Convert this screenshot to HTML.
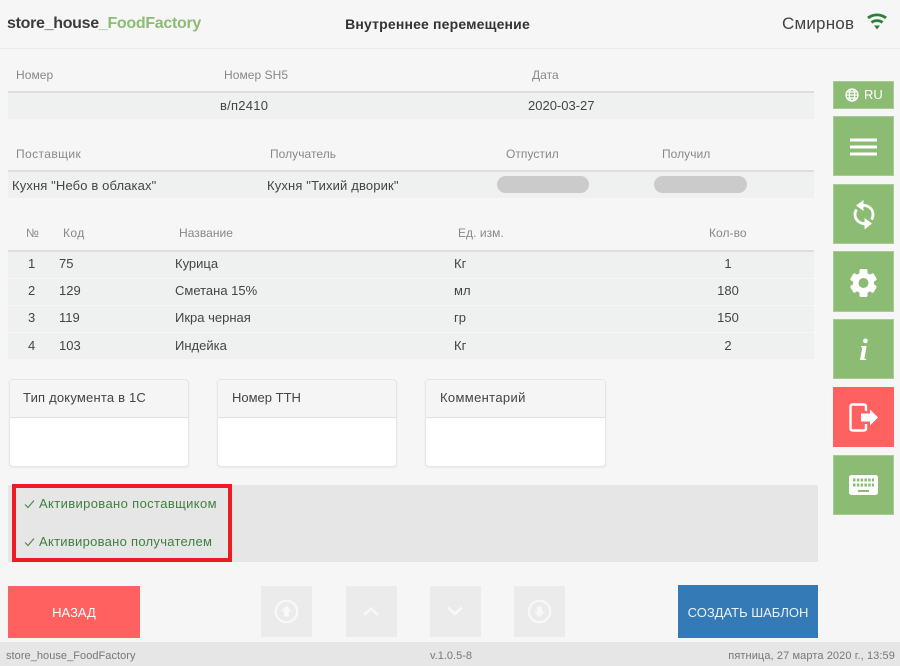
<!DOCTYPE html>
<html lang="ru"><head><meta charset="utf-8"><title>Внутреннее перемещение</title>
<style>
html,body{margin:0;padding:0}
body{width:900px;height:666px;position:relative;overflow:hidden;background:#f6f6f6;font-family:"Liberation Sans",sans-serif;color:#444}
.a{position:absolute}
.t{position:absolute;white-space:nowrap;line-height:16px;font-size:13px;color:#444}
.l{color:#888;font-size:12px;letter-spacing:.05px}
.c{transform:translateX(-50%)}
.band{position:absolute;left:8px;width:806px;background:#eff1f1}
.line{position:absolute;left:8px;width:806px;height:2px;background:#dedede}
.g{position:absolute;left:833px;width:61px;background:#8cbb74;box-shadow:0 0 0 1px #a6cb93 inset}
.card{position:absolute;top:379px;height:86px;background:#fff;border:1px solid #e6e6e6;border-radius:4px;box-shadow:0 1px 2px rgba(0,0,0,.06);overflow:hidden}
.card div{background:#f5f5f5;border-bottom:1px solid #e2e2e2;padding:10px 0 0 14px;box-sizing:border-box;height:38px;font-size:13px;line-height:16px;color:#444}
.sq{position:absolute;top:586px;width:51px;height:51px;background:#ebebeb}
svg{position:absolute;display:block}
</style></head><body>

<div class="t" style="left:7px;top:15px;font-size:16px;font-weight:bold;line-height:18px;letter-spacing:-.3px;color:#3c3c3c">store_house<span style="color:#8cbb74;font-weight:bold">_FoodFactory</span></div>
<div class="t c" style="left:437.500px;top:16px;font-size:14px;font-weight:bold;letter-spacing:.17px;color:#333">Внутреннее перемещение</div>
<div class="t" style="left:782px;top:14px;font-size:17px;line-height:20px;letter-spacing:.2px;color:#444">Смирнов</div>
<svg style="left:865px;top:12px" width="24" height="20" viewBox="0 0 24 20"><g fill="none" stroke="#2f7d3a" stroke-width="2.800"><path d="M3 6C8 1.800 16 1.800 21 6"/><path d="M6.500 10.500C9.500 8 14.500 8 17.500 10.500"/></g><path d="M9 13.500H15L12 17.500Z" fill="#2f7d3a"/></svg>
<div class="a" style="left:0;top:48px;width:900px;height:1px;background:#ebebeb"></div>

<div class="t l" style="left:16px;top:67px">Номер</div>
<div class="t l" style="left:224px;top:67px">Номер SH5</div>
<div class="t l" style="left:532px;top:67px">Дата</div>
<div class="band" style="top:92px;height:27px"></div><div class="line" style="top:91px"></div>
<div class="t" style="left:220px;top:98px;letter-spacing:.25px">в/п2410</div>
<div class="t" style="left:528px;top:98px">2020-03-27</div>

<div class="t l" style="left:16px;top:146px;letter-spacing:.4px">Поставщик</div>
<div class="t l" style="left:270px;top:146px">Получатель</div>
<div class="t l" style="left:506px;top:146px">Отпустил</div>
<div class="t l" style="left:662px;top:146px">Получил</div>
<div class="band" style="top:171px;height:27px"></div><div class="line" style="top:170px"></div>
<div class="t" style="left:12px;top:178px;letter-spacing:.13px">Кухня "Небо в облаках"</div>
<div class="t" style="left:267px;top:178px;letter-spacing:.15px">Кухня "Тихий дворик"</div>
<div class="a" style="left:497px;top:176px;width:92px;height:17px;border-radius:9px;background:#cbcbcb"></div>
<div class="a" style="left:654px;top:176px;width:93px;height:17px;border-radius:9px;background:#cbcbcb"></div>

<div class="t l" style="left:26px;top:225px">№</div>
<div class="t l" style="left:63px;top:225px;letter-spacing:.4px">Код</div>
<div class="t l" style="left:179px;top:225px">Название</div>
<div class="t l" style="left:458px;top:225px">Ед. изм.</div>
<div class="t l" style="left:709px;top:225px">Кол-во</div>
<div class="band" style="top:251px;height:27px"></div><div class="line" style="top:250px"></div>
<div class="band" style="top:279px;height:26px"></div>
<div class="band" style="top:306px;height:26px"></div>
<div class="band" style="top:333px;height:26px"></div>

<div class="t" style="left:28px;top:256px">1</div><div class="t" style="left:59px;top:256px">75</div><div class="t" style="left:175px;top:256px">Курица</div><div class="t" style="left:454px;top:256px">Кг</div><div class="t c" style="left:728px;top:256px">1</div>
<div class="t" style="left:28px;top:283px">2</div><div class="t" style="left:59px;top:283px">129</div><div class="t" style="left:175px;top:283px">Сметана 15%</div><div class="t" style="left:454px;top:283px">мл</div><div class="t c" style="left:728px;top:283px">180</div>
<div class="t" style="left:28px;top:310px">3</div><div class="t" style="left:59px;top:310px">119</div><div class="t" style="left:175px;top:310px">Икра черная</div><div class="t" style="left:454px;top:310px">гр</div><div class="t c" style="left:728px;top:310px">150</div>
<div class="t" style="left:28px;top:338px">4</div><div class="t" style="left:59px;top:338px">103</div><div class="t" style="left:175px;top:338px">Индейка</div><div class="t" style="left:454px;top:338px">Кг</div><div class="t c" style="left:728px;top:338px">2</div>

<div class="card" style="left:9px;width:178px"><div style="letter-spacing:.2px;padding-left:13px">Тип документа в 1С</div></div>
<div class="card" style="left:217px;width:178px"><div>Номер ТТН</div></div>
<div class="card" style="left:425px;width:179px"><div style="letter-spacing:.35px">Комментарий</div></div>

<div class="a" style="left:8px;top:485px;width:810px;height:77px;background:#e6e6e6"></div>
<div class="a" style="left:12px;top:484px;width:220px;height:78px;box-sizing:border-box;border:4px solid #ed1c24"></div>
<svg style="left:24px;top:499px" width="11" height="10" viewBox="0 0 11 10"><path d="M1 5.500L4 8.500L10 1.500" fill="none" stroke="#4d8a4d" stroke-width="1.200"/></svg>
<div class="t" style="left:39px;top:496px;color:#3f8040;letter-spacing:.37px">Активировано поставщиком</div>
<svg style="left:24px;top:537px" width="11" height="10" viewBox="0 0 11 10"><path d="M1 5.500L4 8.500L10 1.500" fill="none" stroke="#4d8a4d" stroke-width="1.200"/></svg>
<div class="t" style="left:39px;top:534px;color:#3f8040;letter-spacing:.28px">Активировано получателем</div>

<div class="a" style="left:8px;top:586px;width:132px;height:52px;background:#ff6161;color:#fff;font-size:13px;line-height:54px;text-align:center">НАЗАД</div>
<div class="a" style="left:678px;top:585px;width:140px;height:53px;background:#337ab7;font-size:13px;line-height:55px;text-align:center;color:#eaf2f8">СОЗДАТЬ ШАБЛОН</div>

<div class="sq" style="left:261px"><svg style="left:13px;top:13px" width="25" height="25" viewBox="0 0 25 25"><circle cx="12.500" cy="12.500" r="10.700" fill="none" stroke="#f8f8f8" stroke-width="2.200"/><path d="M12.500 6.500L18 12.500H15V17.500H10V12.500H7Z" fill="#f8f8f8"/></svg></div>
<div class="sq" style="left:346px"><svg style="left:14px;top:17px" width="22" height="16" viewBox="0 0 22 16"><path d="M4 12L11 5.500L18 12" fill="none" stroke="#f8f8f8" stroke-width="2.600"/></svg></div>
<div class="sq" style="left:430px"><svg style="left:14px;top:17px" width="22" height="16" viewBox="0 0 22 16"><path d="M4 4.500L11 11L18 4.500" fill="none" stroke="#f8f8f8" stroke-width="2.600"/></svg></div>
<div class="sq" style="left:514px"><svg style="left:13px;top:13px" width="25" height="25" viewBox="0 0 25 25"><circle cx="12.500" cy="12.500" r="10.700" fill="none" stroke="#f8f8f8" stroke-width="2.200"/><path d="M12.500 18.500L18 12.500H15V7.500H10V12.500H7Z" fill="#f8f8f8"/></svg></div>

<div class="a" style="left:0;top:642px;width:900px;height:24px;background:#e6e6e6"></div>
<div class="t" style="left:6px;top:648px;font-size:11px;color:#777;letter-spacing:.05px">store_house_FoodFactory</div>
<div class="t" style="left:430px;top:648px;font-size:11px;color:#777">v.1.0.5-8</div>
<div class="t" style="right:5px;top:648px;font-size:11px;color:#777;letter-spacing:.1px">пятница, 27 марта 2020 г., 13:59</div>

<div class="g" style="top:81px;height:28px"></div>
<svg style="left:845px;top:88px" width="14" height="14" viewBox="0 0 14 14"><g fill="none" stroke="#fff" stroke-width="1.300"><circle cx="7" cy="7" r="6"/><ellipse cx="7" cy="7" rx="2.700" ry="6"/><path d="M1 7H13M2 4H12M2 10H12"/></g></svg>
<div class="t" style="left:864px;top:87px;font-size:13px;color:#fff">RU</div>

<div class="g" style="top:116px;height:60px"></div>
<svg style="left:850px;top:137px" width="27" height="20" viewBox="0 0 27 20"><path d="M0 3H27M0 10H27M0 17H27" stroke="#fff" stroke-width="3"/></svg>

<div class="g" style="top:184px;height:60px"></div>
<svg style="left:851px;top:199px" width="26" height="32" viewBox="0 0 26 32"><g fill="none" stroke="#fff" stroke-width="2.800"><path d="M10 6.500C15 5.500 22 8.500 22 15.500C22 17.500 21.500 19 20.500 20.500"/><path d="M16 24.500C11 25.500 4 22.500 4 15.500C4 13.500 4.500 12 5.500 10.500"/></g><path d="M12.500 1V12L5 6.500Z" fill="#fff"/><path d="M13.500 19V30.500L21 24.500Z" fill="#fff"/></svg>

<div class="g" style="top:251px;height:61px"></div>
<svg style="left:849px;top:268px" width="29" height="30" viewBox="0 0 29 30"><g fill="#fff"><rect x="10.500" y="1" width="8" height="28" rx="1.500"/><rect x="10.500" y="1.500" width="8" height="27" rx="1.500" transform="rotate(60 14.500 15)"/><rect x="10.500" y="1.500" width="8" height="27" rx="1.500" transform="rotate(120 14.500 15)"/><circle cx="14.500" cy="15" r="10.500"/></g><circle cx="14.500" cy="15" r="5" fill="#8cbb74"/></svg>

<div class="g" style="top:319px;height:60px"></div>
<div class="a" style="left:833px;top:332px;width:61px;text-align:center;font-family:'Liberation Serif',serif;font-style:italic;font-weight:bold;font-size:31px;line-height:36px;color:#fff">i</div>

<div class="a" style="left:833px;top:387px;width:61px;height:60px;background:#ff6161"></div>
<svg style="left:849px;top:403px" width="30" height="29" viewBox="0 0 30 29"><path d="M17 8V3.500C17 2.300 16 1.500 15 1.500H3.500C2.300 1.500 1.500 2.300 1.500 3.500V25.500C1.500 26.700 2.300 27.500 3.500 27.500H15C16 27.500 17 26.700 17 25.500V21" fill="none" stroke="#fff" stroke-width="2.400"/><path d="M12 10.500H21V6.500L29 14.500L21 22.500V18.500H12Z" fill="#fff"/></svg>

<div class="g" style="top:455px;height:60px"></div>
<svg style="left:849px;top:475px" width="29" height="20" viewBox="0 0 29 20"><rect width="29" height="20" rx="2.500" fill="#fff"/><path d="M4 5H25M4 10H25" stroke="#8cbb74" stroke-width="3" stroke-dasharray="2.500 1.300"/><rect x="9" y="15" width="11" height="2" fill="#8cbb74"/></svg>

</body></html>
